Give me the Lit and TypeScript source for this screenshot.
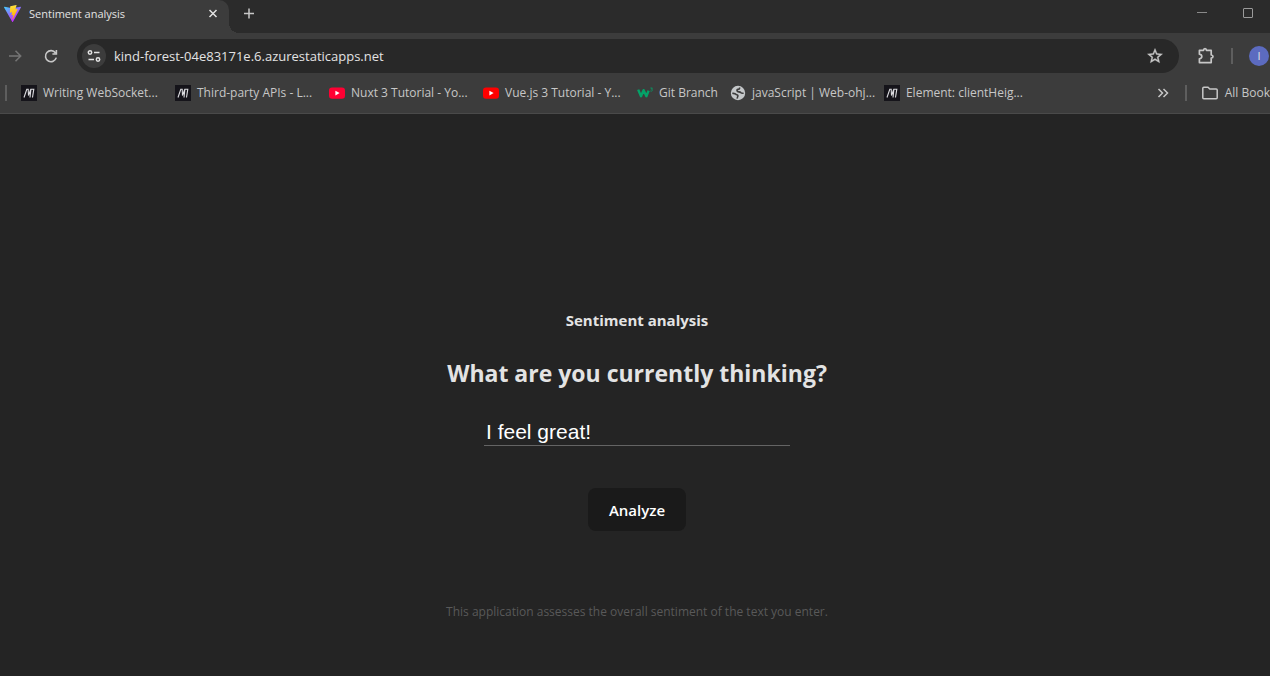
import { LitElement, html, css } from "lit";
import { customElement, property, state } from "lit/decorators.js";
import { classMap } from "lit/directives/class-map.js";

const mdn = html`<svg width="16" height="16" viewBox="0 0 16 16" aria-hidden="true">
  <rect width="16" height="16" fill="#15141a"></rect>
  <path d="M3 12.500 5.800 4.200h1.400l.3 6.300 2.300-6.300h3L11.500 12.500M9.900 4.200 9 12.500" stroke="#dcdce0" stroke-width="1.100" fill="none"></path>
</svg>`;

const youtube = (fill: string) => html`<svg width="16" height="16" viewBox="0 0 16 16" aria-hidden="true">
  <rect y="2.4" width="16" height="11.4" rx="3" fill=${fill}></rect>
  <path d="m6.4 5.8 4.2 2.3-4.2 2.3z" fill="#fff"></path>
</svg>`;

const w3 = html`<svg width="16" height="16" viewBox="0 0 16 16" aria-hidden="true">
  <path d="M1.200 4.600 4 11.200 6.600 5.200 9.400 11.200 11.600 5.600" fill="none" stroke="#04a268" stroke-width="2.400" stroke-linejoin="round"></path>
  <path d="M13.400 3h2l-1 1.200q1.300.1 1 1.200-.4 1-2 .6" fill="none" stroke="#04a268" stroke-width=".8"></path>
</svg>`;

const globe = html`<svg width="16" height="16" viewBox="0 0 16 16" aria-hidden="true">
  <circle cx="8" cy="8" r="7.200" fill="#c4c7c9"></circle>
  <path d="M2.300 8.300c1.600.2 3 .2 3.600 1 .5.8 1.800.2 2 1.400.1 1-.8 1.300-.6 2.900M9.400 2.500c.6 1.400-.3 1.800-1.600 1.900-1.200.2-.9 1.500-.3 2 .8.700 2.300.2 3.100 1 .6.800 1.700.9 3 .800" fill="none" stroke="#3c3c3c" stroke-width="1.600"></path>
</svg>`;

const bookmarks = [
  { icon: mdn, label: "Writing WebSocket...", full: true },
  { icon: mdn, label: "Third-party APIs - L...", full: true },
  { icon: youtube("#ff0033"), label: "Nuxt 3 Tutorial - Yo...", full: true },
  { icon: youtube("#ff0000"), label: "Vue.js 3 Tutorial - Y...", full: true },
  { icon: w3, label: "Git Branch", full: false },
  { icon: globe, label: "javaScript | Web-ohj...", full: true },
  { icon: mdn, label: "Element: clientHeig...", full: true },
];

@customElement("browser-chrome")
export class BrowserChrome extends LitElement {
  @property() url = "";

  static styles = css`
    :host {
      display: block;
      overflow: hidden;
      background: #3c3c3c;
      color: #e3e3e3;
      font: 12px/16px "Open Sans", "Noto Sans", sans-serif;
      border-bottom: 1px solid #4a4a4a;
    }
    button {
      display: grid;
      place-items: center;
      padding: 0;
      border: 0;
      background: none;
      color: #c7c7c7;
      font: inherit;
    }
    svg {
      display: block;
      flex: none;
    }
    .strip {
      display: flex;
      align-items: center;
      height: 33px;
      background: #2b2b2b;
    }
    .tab {
      display: flex;
      align-items: center;
      align-self: stretch;
      gap: 8px;
      width: 229px;
      box-sizing: border-box;
      padding: 0 8px 6px 4px;
      border-top-right-radius: 10px;
      background: #3c3c3c;
    }
    .title {
      flex: 1;
      font-size: 11px;
    }
    .tab button {
      width: 16px;
      height: 16px;
      color: #e3e3e3;
    }
    .flare {
      align-self: flex-end;
      width: 10px;
      height: 10px;
      background: radial-gradient(circle at 100% 0, #2b2b2b 10px, #3c3c3c 10px);
    }
    .strip > button {
      width: 20px;
      height: 27px;
      align-self: flex-start;
    }
    .window {
      display: flex;
      align-self: flex-start;
      gap: 30px;
      margin-left: auto;
      padding-right: 14px;
    }
    .window button {
      width: 16px;
      height: 26px;
    }
    .toolbar {
      display: flex;
      align-items: center;
      height: 46px;
      padding-left: 6px;
    }
    .reload {
      margin-left: 19px;
    }
    .omnibox {
      display: flex;
      flex: 1;
      align-items: center;
      height: 34px;
      min-width: 0;
      box-sizing: border-box;
      margin: 0 18px;
      padding: 0 15px 0 5px;
      border-radius: 17px;
      background: #282828;
    }
    .site {
      width: 24px;
      height: 24px;
      border-radius: 50%;
      background: #3c3c3c;
      color: #e3e3e3;
    }
    .omnibox input {
      flex: 1;
      min-width: 0;
      padding: 0 8px;
      border: 0;
      outline: 0;
      background: none;
      color: #e3e3e3;
      font: 13px/20px "Open Sans", "Noto Sans", sans-serif;
    }
    .rule {
      flex: none;
      width: 2px;
      height: 16px;
      background: #5e5e5e;
    }
    .toolbar .rule {
      margin: 0 16px;
    }
    .avatar {
      flex: none;
      width: 20px;
      height: 20px;
      margin-right: 1px;
      border-radius: 50%;
      background: #5c6bc0;
      color: #e3e3e3;
      font-size: 11px;
    }
    .bookmarks {
      display: flex;
      align-items: center;
      height: 34px;
      box-sizing: border-box;
      padding: 0 0 6px 5px;
      white-space: nowrap;
    }
    .items {
      display: flex;
      flex: 1;
      gap: 12px;
      min-width: 0;
      margin-left: 14px;
    }
    a {
      display: flex;
      align-items: center;
      gap: 6px;
      color: #c7c7c7;
      text-decoration: none;
    }
    .full {
      width: 142px;
    }
    .all {
      margin-left: 14px;
    }
    .more {
      margin-right: 15px;
    }
  `;

  render() {
    return html`
      <div class="strip">
        <div class="tab">
          <svg width="17" height="17" viewBox="0 0 256 257" aria-hidden="true">
            <defs>
              <linearGradient id="shield" x1="0" x2=".6" y1="0" y2=".8">
                <stop offset="0" stop-color="#41d1ff"></stop>
                <stop offset="1" stop-color="#bd34fe"></stop>
              </linearGradient>
              <linearGradient id="bolt" x1=".4" x2=".5" y1="0" y2="1">
                <stop offset="0" stop-color="#ffea83"></stop>
                <stop offset=".1" stop-color="#ffdd35"></stop>
                <stop offset="1" stop-color="#ffa800"></stop>
              </linearGradient>
            </defs>
            <path fill="url(#shield)" d="M255.200 37.900 134.900 252.900c-2.500 4.400-8.900 4.500-11.400 0L.9 37.900c-2.700-4.800 1.300-10.700 6.800-9.700l120.300 21.500 120.400-21.500c5.400-1 9.500 4.900 6.800 9.700z"></path>
            <path fill="url(#bolt)" d="M185.400 0 96.400 17.400a3.300 3.300 0 0 0-2.600 3l-5.500 92.500c-.1 2.200 1.900 3.900 4 3.400l24.800-5.700c2.300-.5 4.400 1.500 3.900 3.800l-7.400 36c-.5 2.500 1.800 4.500 4.200 3.800l15.300-4.700c2.400-.7 4.700 1.400 4.200 3.800l-11.700 56.600c-.7 3.500 4 5.500 6 2.500l1.300-2 72.500-144.700c1.200-2.400-.9-5.200-3.500-4.700l-25.500 4.900c-2.400.5-4.400-1.700-3.800-4.100l16.600-57.700c.7-2.400-1.400-4.600-3.800-4.100z"></path>
          </svg>
          <span class="title">Sentiment analysis</span>
          <button aria-label="Close tab">
            <svg width="16" height="16" viewBox="0 0 16 16"><path d="m4.500 4 7 7m0-7-7 7" stroke="currentColor" stroke-width="1.500"></path></svg>
          </button>
        </div>
        <span class="flare"></span>
        <button aria-label="New tab">
          <svg width="16" height="16" viewBox="0 0 16 16"><path d="M8 2.500v10M3 7.500h10" stroke="currentColor" stroke-width="1.500"></path></svg>
        </button>
        <div class="window">
          <button aria-label="Minimize">
            <svg width="16" height="16" viewBox="0 0 16 16"><path d="M3 7.500h10" stroke="#8a8a8a"></path></svg>
          </button>
          <button aria-label="Maximize">
            <svg width="16" height="16" viewBox="0 0 16 16"><rect x="3.500" y="3.500" width="9" height="9" rx=".5" fill="none" stroke="#9a9a9a"></rect></svg>
          </button>
        </div>
      </div>

      <div class="toolbar">
        <button aria-label="Forward">
          <svg width="18" height="18" viewBox="0 0 18 18"><path d="M3 9h11M9.500 3.800 14.700 9l-5.200 5.200" fill="none" stroke="#757575" stroke-width="1.500"></path></svg>
        </button>
        <button class="reload" aria-label="Reload">
          <svg width="16" height="16" viewBox="0 0 16 16"><path d="M13.300 9.600A5.500 5.500 0 1 1 12.500 5M13.400 2v4H9.400" fill="none" stroke="currentColor" stroke-width="1.600"></path></svg>
        </button>
        <div class="omnibox">
          <button class="site" aria-label="View site information">
            <svg width="16" height="16" viewBox="0 0 16 16" fill="none" stroke="currentColor" stroke-width="1.500">
              <circle cx="4" cy="4.500" r="1.700"></circle>
              <path d="M8 4.500h5.500M2.500 11.500H8"></path>
              <circle cx="12" cy="11.500" r="1.700"></circle>
            </svg>
          </button>
          <input aria-label="Address" .value=${this.url} spellcheck="false" />
          <button aria-label="Bookmark this page">
            <svg width="18" height="18" viewBox="0 0 24 24"><path fill="currentColor" stroke="currentColor" stroke-width=".5" d="m22 9.240-7.190-.62L12 2 9.190 8.630 2 9.240l5.460 4.730L5.820 21 12 17.270 18.180 21l-1.630-7.030L22 9.240zM12 15.400l-3.760 2.270 1-4.280-3.320-2.880 4.380-.38L12 6.100l1.710 4.040 4.380.38-3.320 2.880 1 4.280L12 15.400z"></path></svg>
          </button>
        </div>
        <button aria-label="Extensions">
          <svg width="18" height="18" viewBox="0 0 18 18"><path fill="none" stroke="currentColor" stroke-width="1.700" stroke-linejoin="round" d="M2.400 3.400H6.500Q6.600 1.700 8 1.700T9.500 3.400H14.200V8Q16 8.100 16 9.500T14.200 11V15.600H2.400V11.800Q4.800 11.400 4.800 9.500T2.400 7.200Z"></path></svg>
        </button>
        <span class="rule"></span>
        <button class="avatar" aria-label="Profile">I</button>
      </div>

      <nav class="bookmarks">
        <span class="rule"></span>
        <div class="items">
          ${bookmarks.map(
            (b) => html`<a href="#" class=${classMap({ full: b.full })}>${b.icon}<span>${b.label}</span></a>`
          )}
        </div>
        <button class="more" aria-label="More bookmarks">
          <svg width="14" height="14" viewBox="0 0 14 14"><path d="m2.500 3 4 4-4 4M7.500 3l4 4-4 4" fill="none" stroke="currentColor" stroke-width="1.500"></path></svg>
        </button>
        <span class="rule"></span>
        <a class="all" href="#">
          <svg width="18" height="16" viewBox="0 0 18 16"><path d="M1.800 3.300q0-1 1-1H7l1.800 1.800H15.200q1 0 1 1V12.700q0 1-1 1H2.800q-1 0-1-1z" fill="none" stroke="currentColor" stroke-width="1.500"></path></svg>
          <span>All Book</span>
        </a>
      </nav>
    `;
  }
}

@customElement("sentiment-form")
export class SentimentForm extends LitElement {
  @state() private text = "I feel great!";

  static styles = css`
    :host {
      display: flex;
      flex-direction: column;
      align-items: center;
      text-align: center;
      color: #e3e3e3;
      font-family: "Open Sans", "Noto Sans", sans-serif;
    }
    h1 {
      margin: 0;
      font-size: 15px;
      line-height: 24px;
    }
    form {
      display: flex;
      flex-direction: column;
      align-items: center;
    }
    label {
      margin: 23px 0 26px;
      font-size: 23px;
      font-weight: 700;
      line-height: 36px;
    }
    input {
      width: 306px;
      box-sizing: border-box;
      padding: 2px 2px 0;
      border: 0;
      border-bottom: 1px solid #646464;
      outline: 0;
      background: none;
      color: #fff;
      font: 21px/26px "Liberation Sans", Arial, sans-serif;
    }
    button {
      margin: 42px 0 69px;
      padding: 10px 21px 9px;
      border: 0;
      border-radius: 8px;
      background: #1a1a1a;
      color: #fff;
      font: 600 15px/24px "Open Sans", "Noto Sans", sans-serif;
    }
    p {
      margin: 0;
      color: #595959;
      font-size: 12px;
      line-height: 24px;
    }
  `;

  render() {
    return html`
      <h1>Sentiment analysis</h1>
      <form @submit=${(e: Event) => e.preventDefault()}>
        <label for="thought">What are you currently thinking?</label>
        <input
          id="thought"
          .value=${this.text}
          spellcheck="false"
          @input=${(e: Event) => (this.text = (e.target as HTMLInputElement).value)}
        />
        <button>Analyze</button>
      </form>
      <p>This application assesses the overall sentiment of the text you enter.</p>
    `;
  }
}

@customElement("app-root")
export class AppRoot extends LitElement {
  static styles = css`
    :host {
      display: flex;
      flex-direction: column;
      height: 100vh;
      overflow: hidden;
      background: #242424;
    }
    main {
      display: grid;
      flex: 1;
      align-content: end;
      justify-content: center;
      padding: 0 0 52px 4px;
    }
  `;

  render() {
    return html`
      <browser-chrome url="kind-forest-04e83171e.6.azurestaticapps.net"></browser-chrome>
      <main><sentiment-form></sentiment-form></main>
    `;
  }
}
